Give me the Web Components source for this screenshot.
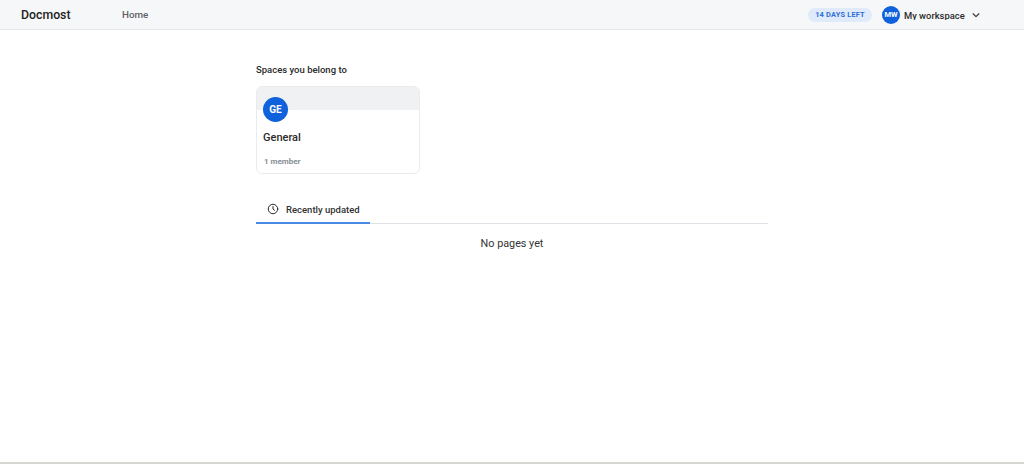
<!DOCTYPE html>
<html>
<head>
<meta charset="utf-8">
<title>Docmost</title>
<style>
  html, body { margin: 0; height: 100%; }
  body {
    font-family: Roboto, "Noto Sans", sans-serif;
    color: #1f1f1f;
    background: #fff;
    overflow: hidden;
  }
  #page { display: flex; flex-direction: column; height: 464px; box-sizing: border-box; border-bottom: 2px solid #d6d6d2; }
</style>
</head>
<body>
<div id="page">
  <app-header></app-header>
  <home-page></home-page>
</div>

<script>
class AppAvatar extends HTMLElement {
  connectedCallback() {
    this.attachShadow({ mode: "open" });
    const size = this.getAttribute("size") || 25;
    const font = this.getAttribute("font") || 10;
    this.shadowRoot.innerHTML = `
      <style>
        :host {
          display: flex; align-items: center; justify-content: center;
          width: ${size}px; height: ${size}px; border-radius: 50%;
          background: #0f62dc; color: #fff; flex: none;
          font-size: ${font}px; font-weight: 700;
        }
      </style>
      <slot></slot>`;
  }
}
customElements.define("app-avatar", AppAvatar);

class AppHeader extends HTMLElement {
  connectedCallback() {
    this.attachShadow({ mode: "open" });
    this.shadowRoot.innerHTML = `
      <style>
        :host {
          display: flex; align-items: center; flex: none;
          height: 30px; box-sizing: border-box;
          padding: 0 43px 0 21px;
          background: #f6f7f8; border-bottom: 1px solid #e6e8eb;
        }
        .logo { font-size: 12.3px; font-weight: 500; color: #222; width: 101px; }
        .home { font-size: 9.8px; font-weight: 500; color: #5c5f66; }
        .spacer { flex: 1; }
        .trial {
          font-size: 7.4px; font-weight: 700; letter-spacing: .2px; color: #2f6fd6;
          background: #dfeafa; border-radius: 8px; height: 14px; width: 64px;
          display: flex; align-items: center; justify-content: center; margin-right: 10px;
        }
        /* descenders are cut off in the reference */
        .workspace {
          font-size: 9.4px; font-weight: 500; color: #2b2b2b; width: 61px; white-space: nowrap;
          margin: 1px 6px 0 4px; line-height: 12px; height: 10px; overflow: hidden;
        }
        svg { display: block; }
      </style>
      <span class="logo">Docmost</span>
      <span class="home">Home</span>
      <span class="spacer"></span>
      <span class="trial">14 DAYS LEFT</span>
      <app-avatar size="18" font="7.5">MW</app-avatar>
      <span class="workspace">My workspace</span>
      <svg width="10" height="10" viewBox="0 0 24 24" fill="none" stroke="#333" stroke-width="2.6" stroke-linecap="round" stroke-linejoin="round"><path d="M5 9l7 7 7-7"/></svg>`;
  }
}
customElements.define("app-header", AppHeader);

class SpaceCard extends HTMLElement {
  connectedCallback() {
    this.attachShadow({ mode: "open" });
    this.shadowRoot.innerHTML = `
      <style>
        :host {
          display: block; width: 164px; height: 88px; box-sizing: border-box;
          border: 1px solid #e9ebee; border-radius: 6px; overflow: hidden; background: #fff;
        }
        .banner { height: 23px; background: #f0f1f3; }
        .avatar-row { margin: -13px 0 0 6px; }
        .name { font-size: 11px; font-weight: 500; color: #2b2b2b; margin: 8px 0 0 6px; line-height: 15px; }
        .meta { font-size: 8px; font-weight: 700; color: #868e96; margin: 11px 0 0 7px; line-height: 12px; }
      </style>
      <div class="banner"></div>
      <div class="avatar-row"><app-avatar size="25" font="10">GE</app-avatar></div>
      <div class="name"><slot name="name"></slot></div>
      <div class="meta"><slot name="meta"></slot></div>`;
  }
}
customElements.define("space-card", SpaceCard);

class RecentTabs extends HTMLElement {
  connectedCallback() {
    this.attachShadow({ mode: "open" });
    this.shadowRoot.innerHTML = `
      <style>
        :host { display: block; border-bottom: 1px solid #dee2e6; height: 27px; box-sizing: border-box; }
        .tab {
          display: flex; align-items: center; gap: 7px; box-sizing: border-box;
          width: 114px; height: 27px; padding: 0 0 1px 11px;
          border-bottom: 2px solid #4a8ae6;
          font-size: 9.5px; font-weight: 500; color: #333;
        }
        svg { display: block; flex: none; }
      </style>
      <div class="tab">
        <svg width="12" height="12" viewBox="0 0 24 24" fill="none" stroke="#2b2b2b" stroke-width="2" stroke-linecap="round" stroke-linejoin="round"><circle cx="12" cy="12" r="9.5"/><path d="M12 7v5l3 2.5"/></svg>
        <slot></slot>
      </div>`;
  }
}
customElements.define("recent-tabs", RecentTabs);

class HomePage extends HTMLElement {
  connectedCallback() {
    this.attachShadow({ mode: "open" });
    this.shadowRoot.innerHTML = `
      <style>
        :host { display: block; width: 512px; margin: 0 auto; }
        h2 { font-size: 9.5px; font-weight: 500; color: #2b2b2b; margin: 33px 0 10px; line-height: 13px; }
        recent-tabs { margin-top: 23px; }
        .empty { text-align: center; font-size: 10.8px; color: #333; margin-top: 12px; line-height: 16px; }
      </style>
      <h2>Spaces you belong to</h2>
      <space-card>
        <span slot="name">General</span>
        <span slot="meta">1 member</span>
      </space-card>
      <recent-tabs>Recently updated</recent-tabs>
      <div class="empty">No pages yet</div>`;
  }
}
customElements.define("home-page", HomePage);
</script>
</body>
</html>
